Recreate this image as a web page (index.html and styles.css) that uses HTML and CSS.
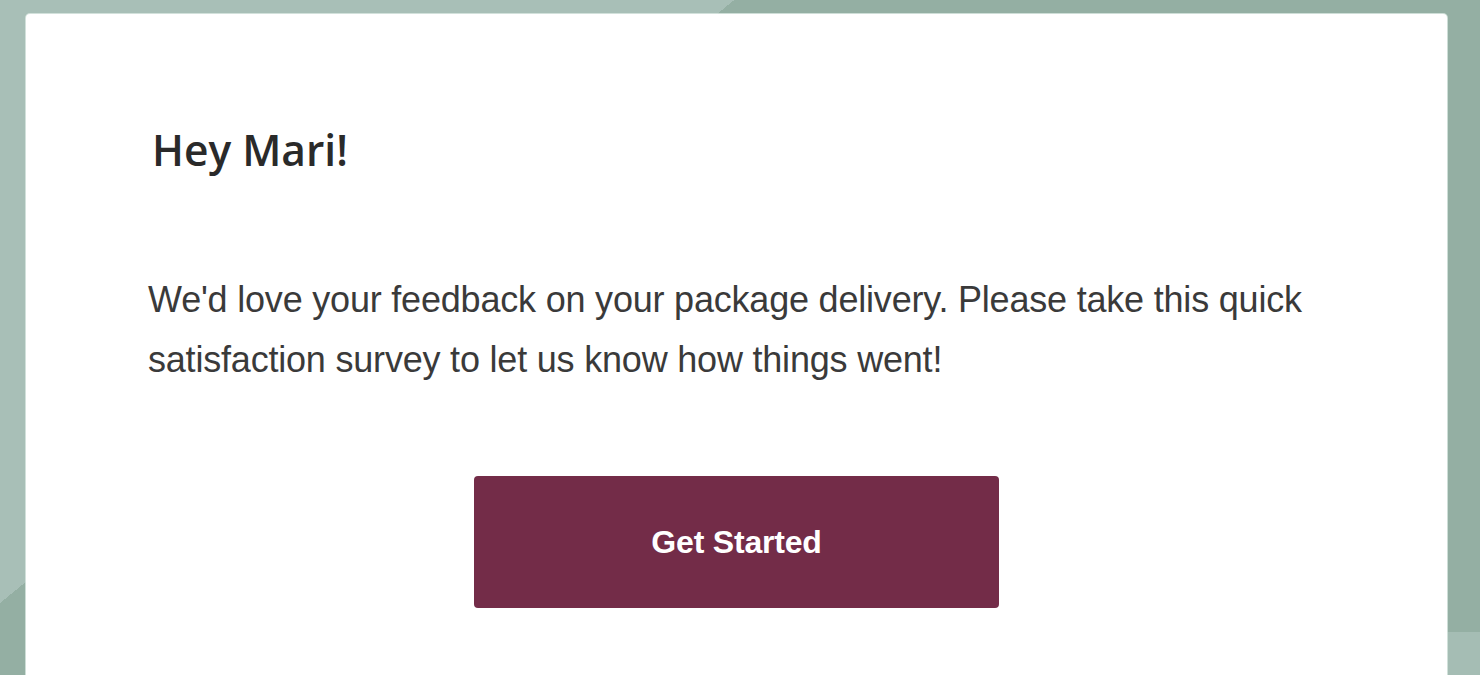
FILE: index.html
```html
<!DOCTYPE html>
<html lang="en">
<head>
    <meta charset="UTF-8">
    <meta name="viewport" content="width=device-width, initial-scale=1.0">
    <title>Delivery Feedback</title>
    <link rel="stylesheet" href="styles.css">
</head>
<body>

    <main class="page">
        <!-- Survey invitation card -->
        <div class="card">
            <h1 class="greeting">Hey Mari!</h1>
            <p class="message">We'd love your feedback on your package delivery. Please take this quick satisfaction survey to let us know how things went!</p>
            <div class="actions">
                <a href="#" class="btn">Get Started</a>
            </div>
        </div>
    </main>

</body>
</html>
```

FILE: styles.css
```css
/* Page background */
html, body {
    height: 100%;
}

body {
    margin: 0;
    overflow: hidden;
    background-color: #94afa3;
    background-image:
        linear-gradient(to bottom, transparent 632px, #a5bdb4 632px),
        linear-gradient(140.6deg, #a8bfb7 466px, #94afa3 466px);
    background-size: 40px 100%, 100% 100%;
    background-position: right top, left top;
    background-repeat: no-repeat;
}

.page {
    padding: 14px 33px 0 26px;
}

/* Card */
.card {
    background-color: #ffffff;
    border-radius: 4px;
    box-shadow: 0 0 0 1px rgba(220, 234, 228, 0.8);
    padding: 106px 122px 140px;
}

.greeting {
    margin: 0 0 0 4px;
    font-family: "Open Sans", "Liberation Sans", sans-serif;
    font-size: 42.5px;
    font-weight: 600;
    line-height: 60px;
    color: #2a2a2a;
}

.message {
    margin: 90px 0 0;
    font-family: "Liberation Sans", Arial, sans-serif;
    font-size: 36px;
    line-height: 60px;
    letter-spacing: -0.2px;
    color: #3a3a3a;
}

.actions {
    display: flex;
    justify-content: center;
    margin-top: 86px;
}

.btn {
    display: flex;
    align-items: center;
    justify-content: center;
    width: 525px;
    height: 132px;
    background-color: #732c48;
    border-radius: 4px;
    color: #ffffff;
    font-family: "Liberation Sans", Arial, sans-serif;
    font-size: 32px;
    font-weight: bold;
    letter-spacing: -0.2px;
    text-decoration: none;
}

.btn:hover {
    background-color: #65263f;
}
```
